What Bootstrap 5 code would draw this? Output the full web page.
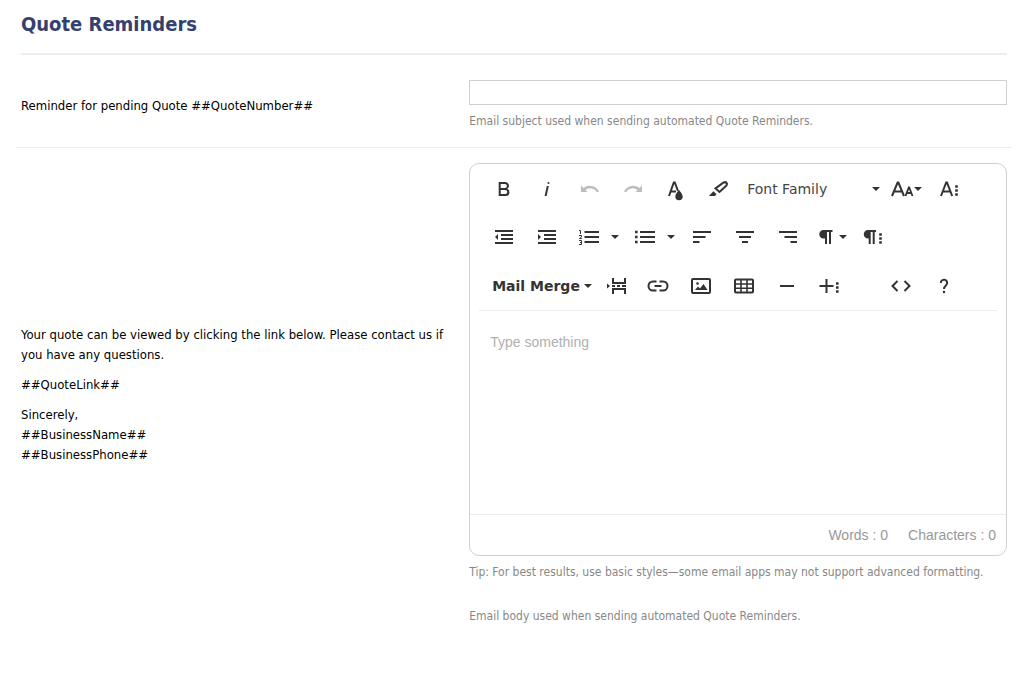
<!DOCTYPE html>
<html lang="en">
<head>
<meta charset="utf-8">
<meta name="viewport" content="width=device-width, initial-scale=1">
<title>Quote Reminders</title>
<link rel="stylesheet" href="https://cdn.jsdelivr.net/npm/bootstrap@5.3.0/dist/css/bootstrap.min.css">
<style>
  body { font: 13px/20px Tahoma, "DejaVu Sans Condensed", "DejaVu Sans", sans-serif; color: #000; }
  .page-wrap { padding: 8px 12px 0 16px; }
  .section-title { margin: 0 5px; padding-bottom: 13px; border-bottom: 2px solid #ededed; font-size: 20px; line-height: 32px; font-weight: 700; color: #354070; }
  .setting { display: grid; grid-template-columns: 45fr 55fr; align-items: center; padding-bottom: 16px; }
  .setting > * { padding: 0 5px; min-width: 0; }
  .setting-subject { padding-top: 25px; border-bottom: 1px solid #ededed; }
  .setting-body { padding-top: 15px; }
  .letter-part { display: block; margin-bottom: 10px; }
  .subject-input { height: 25px; padding: 2px 6px; border: 1px solid #d0d0d0; border-radius: 0; font-size: 13px; }
  .hint { margin: 6px 0 0; font-size: 12px; line-height: 20px; color: #888; }
  .hint + .hint { margin-top: 24px; }
  .editor-box { border: 1px solid #d0d0d0; border-radius: 10px; }
  .editor-tools { margin: 0 9px; padding: 1px 0 0 3px; border-bottom: 1px solid #ededed; font: 14px/24px Verdana, "DejaVu Sans", sans-serif; }
  .tool-row { display: flex; height: 48px; align-items: center; }
  .tool-row:last-child { margin-top: 1px; }
  .tool { display: flex; align-items: center; justify-content: center; flex: none; width: 43px; height: 38px; padding: 0; border: 0; border-radius: 4px; background: none; color: #333; }
  .tool:hover { background: #ebebeb; }
  .tool:disabled { color: #bdbdbd; }
  .tool svg { width: 24px; height: 24px; fill: none; stroke: currentColor; stroke-width: 2; flex: none; }
  .tool .solid { fill: currentColor; stroke: none; }
  .tool-split { width: 56px; justify-content: flex-start; padding-left: 9px; }
  .tool-split .caret { margin-left: 10px; }
  .tool-font { width: 144px; justify-content: space-between; padding: 0 4px 0 7px; color: #444; }
  .tool-size { width: 44px; }
  .tool-more { width: 38px; }
  .tool-merge { width: 116px; justify-content: flex-start; gap: 4px; padding-left: 10px; font-weight: 700; }
  .tool-gap { margin-left: 28px; }
  .caret { flex: none; border: 4px solid transparent; border-top-color: #333; border-bottom: 0; }
  .editor-text { display: block; width: 100%; height: 203px; padding: 20px; border: 0; border-radius: 0; resize: none; outline: 0; font: 14px/22px Helvetica, "Liberation Sans", sans-serif; color: #222; }
  .editor-text::placeholder { color: #b0b0b0; }
  .editor-foot { display: flex; justify-content: flex-end; gap: 20px; padding: 10px; border-top: 1px solid #ededed; font: 14px/20px Helvetica, "Liberation Sans", sans-serif; color: #999; }
</style>
</head>
<body>
<main class="page-wrap">
  <h1 class="section-title">Quote Reminders</h1>

  <div class="setting setting-subject">
    <label for="subject">Reminder for pending Quote ##QuoteNumber##</label>
    <div>
      <input type="text" class="form-control subject-input" id="subject" aria-describedby="subjectHint">
      <p class="hint" id="subjectHint">Email subject used when sending automated Quote Reminders.</p>
    </div>
  </div>

  <div class="setting setting-body">
    <label for="body">
      <span class="letter-part">Your quote can be viewed by clicking the link below. Please contact us if you have any questions.</span>
      <span class="letter-part">##QuoteLink##</span>
      <span class="d-block">Sincerely,<br>##BusinessName##<br>##BusinessPhone##</span>
    </label>
    <div>
      <div class="editor-box">
        <div class="editor-tools" role="toolbar" aria-label="Formatting">
          <div class="tool-row">
            <button type="button" class="tool" aria-label="Bold"><svg viewBox="0 0 24 24"><path class="solid" d="M15.3 11.8A3.7 3.7 0 0 0 17 9a3.9 3.9 0 0 0-3.9-4H6.7v14h7a3.7 3.7 0 0 0 3.7-3.8 3.6 3.6 0 0 0-2.1-3.4zM8.7 7h4.2a2 2 0 1 1 0 4H8.7zm4.6 10H8.7v-4h4.6a2 2 0 1 1 0 4z"/></svg></button>
            <button type="button" class="tool" aria-label="Italic"><svg viewBox="0 0 24 24"><path class="solid" d="M11.8 9h2l-2.2 10h-2zm1.700-4a1 1 0 1 0 1 1 1 1 0 0 0-1-1z"/></svg></button>
            <button type="button" class="tool" aria-label="Undo" disabled><svg viewBox="0 0 24 24"><path class="solid" d="M3 8.500V15h6.500L7.400 12.900A7.800 7.800 0 0 1 19 15.300l2-.9A10.300 10.300 0 0 0 5.500 11z"/></svg></button>
            <button type="button" class="tool" aria-label="Redo" disabled><svg viewBox="0 0 24 24"><path class="solid" d="M21 8.500V15h-6.500l2.100-2.100A7.800 7.800 0 0 0 5 15.300l-2-.9A10.300 10.300 0 0 1 18.500 11z"/></svg></button>
            <button type="button" class="tool" aria-label="Text colour"><svg viewBox="0 0 24 24"><path d="M5 19 9.800 5.500h1L14 14M6.500 14.500H12"/><path class="solid" d="M15 13s3.700 4 3.700 6.500a3.700 3.700 0 0 1-7.400 0C11.300 17 15 13 15 13z"/></svg></button>
            <button type="button" class="tool" aria-label="Background colour"><svg viewBox="0 0 24 24"><path stroke-width="2" d="M16.300 5.600 18.800 5.200 20 6.700 19.500 8.500l-7 6.500-4-3.600z"/><path class="solid" d="M6.300 14.200 9.500 17l-1.500 2H2z"/></svg></button>
            <button type="button" class="tool tool-font">Font Family<span class="caret"></span></button>
            <button type="button" class="tool tool-size" aria-label="Font size"><svg viewBox="0 0 24 24"><path d="M2 19 7.600 5.500h.8L14 19M4 14.500h8"/><path stroke-width="1.800" d="m15.500 19 3.300-8.500h.4l3.300 8.500M16.500 16h5"/></svg><span class="caret"></span></button>
            <button type="button" class="tool" aria-label="More text"><svg viewBox="0 0 24 24"><path d="M3 19 8.200 5.500h.8L14.200 19M5 14.500h7.500"/><path stroke-width="2.500" d="M17.200 9.500h2.600M17.200 13.500h2.600M17.200 17.500h2.600"/></svg></button>
          </div>
          <div class="tool-row">
            <button type="button" class="tool" aria-label="Decrease indent"><svg viewBox="0 0 24 24"><path d="M3 6h18M9 10h12M9 14h12M3 18h18"/><path class="solid" d="m3 12 3-3v6z"/></svg></button>
            <button type="button" class="tool" aria-label="Increase indent"><svg viewBox="0 0 24 24"><path d="M3 6h18M9 10h12M9 14h12M3 18h18"/><path class="solid" d="M6 12 3 9v6z"/></svg></button>
            <button type="button" class="tool tool-split" aria-label="Numbered list"><svg viewBox="0 0 24 24"><path d="M7.500 7H22M7.500 12H22M7.500 17H22"/><path stroke-width="1" d="M2 5.500h1.500V9M2 10.500h2.500V12l-2 1.500h2.300M2 15.500h2.500v4H2M3 17.500h1.500"/></svg><span class="caret"></span></button>
            <button type="button" class="tool tool-split" aria-label="Bulleted list"><svg viewBox="0 0 24 24"><path d="M7 7h15M7 12h15M7 17h15"/><path stroke-width="2.600" d="M2 7h2.600M2 12h2.600M2 17h2.600"/></svg><span class="caret"></span></button>
            <button type="button" class="tool" aria-label="Align left"><svg viewBox="0 0 24 24"><path d="M3 7h18M3 12h12.500M3 17h6.500"/></svg></button>
            <button type="button" class="tool" aria-label="Align centre"><svg viewBox="0 0 24 24"><path d="M3 7h18M6 12h12M9 17h6"/></svg></button>
            <button type="button" class="tool" aria-label="Align right"><svg viewBox="0 0 24 24"><path d="M3 7h18M8.500 12H21M14.500 17H21"/></svg></button>
            <button type="button" class="tool" aria-label="Paragraph format"><svg viewBox="0 0 24 24"><path class="solid" d="M8.500 5H17.500v2H16v12h-2V7h-2v12h-2v-5.500H8.500a4.250 4.250 0 0 1 0-8.500z"/></svg><span class="caret"></span></button>
            <button type="button" class="tool" aria-label="More paragraph"><svg viewBox="0 0 24 24"><path class="solid" d="M6 5H14v2h-1.300v12h-2V7h-2v12h-2v-5.500H6A4.250 4.250 0 0 1 6 5z"/><path stroke-width="2.500" d="M17.200 9.500h2.600M17.200 13.500h2.600M17.200 17.500h2.600"/></svg></button>
          </div>
          <div class="tool-row">
            <button type="button" class="tool tool-merge">Mail Merge<span class="caret"></span></button>
            <button type="button" class="tool tool-more" aria-label="Page break"><svg viewBox="0 0 24 24"><path d="M8 4v5h12V4M8 20v-5h12v5"/><path d="M7 12h3M12 12h3M17 12h4"/><path class="solid" d="m2 9.500 3 2.500-3 2.500z"/></svg></button>
            <button type="button" class="tool" aria-label="Insert link"><svg viewBox="0 0 24 24"><path d="M10.500 7.500H7a4.500 4.500 0 0 0 0 9h3.500M13.500 7.500H17a4.500 4.500 0 0 1 0 9h-3.500M8.500 12h7"/></svg></button>
            <button type="button" class="tool" aria-label="Insert image"><svg viewBox="0 0 24 24"><rect x="3" y="5" width="18" height="14" rx="1"/><path class="solid" d="m6 16 3-3.500 2 2L14.500 10l4 6z"/><circle class="solid" cx="8.500" cy="9.500" r="1.300"/></svg></button>
            <button type="button" class="tool" aria-label="Insert table"><svg viewBox="0 0 24 24"><rect x="3" y="5.500" width="18" height="13" rx="1"/><path stroke-width="1.600" d="M3 10h18M3 14.300h18M9 5.500v13M15 5.500v13"/></svg></button>
            <button type="button" class="tool" aria-label="Horizontal line"><svg viewBox="0 0 24 24"><path d="M5 12h14"/></svg></button>
            <button type="button" class="tool" aria-label="More rich"><svg viewBox="0 0 24 24"><path d="M1.500 12h14M8.500 5v14"/><path stroke-width="2.500" d="M18 9.500h2.600M18 13.500h2.600M18 17.500h2.600"/></svg></button>
            <button type="button" class="tool tool-gap" aria-label="Code view"><svg viewBox="0 0 24 24"><path d="m8.500 7-5 5 5 5M15.500 7l5 5-5 5"/></svg></button>
            <button type="button" class="tool" aria-label="Help"><svg viewBox="0 0 24 24"><path d="M8.800 9a3.200 3.200 0 1 1 5.300 2.300C12.600 12.600 12 13.200 12 15"/><path stroke-width="2.200" d="M10.900 18h2.200"/></svg></button>
          </div>
        </div>
        <textarea class="editor-text" id="body" placeholder="Type something"></textarea>
        <div class="editor-foot"><span>Words : 0</span><span>Characters : 0</span></div>
      </div>
      <p class="hint">Tip: For best results, use basic styles—some email apps may not support advanced formatting.</p>
      <p class="hint">Email body used when sending automated Quote Reminders.</p>
    </div>
  </div>
</main>
<script src="https://cdn.jsdelivr.net/npm/bootstrap@5.3.0/dist/js/bootstrap.bundle.min.js"></script>
</body>
</html>
